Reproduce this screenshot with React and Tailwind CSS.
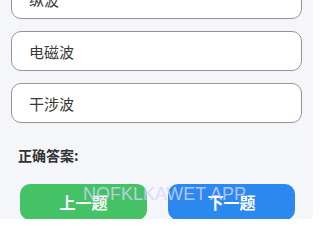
export default function App() {
  const font = { fontFamily: '"Noto Sans CJK SC", "Noto Sans", sans-serif' };
  return (
    <div className="w-[313px] h-[219px] overflow-hidden bg-[#f4f6f9] relative" style={font}>
      <div className="flex flex-col gap-[12px] px-[11px] -mt-[21px] w-[313px]">
        {['纵波', '电磁波', '干涉波'].map((t) => (
          <div key={t} className="h-[40px] bg-white border border-[#959595] rounded-[10px] flex items-center pl-[17px] text-[15px] text-[#3a3a3a] leading-none">
            {t}
          </div>
        ))}
      </div>
      <div className="pl-[18px] mt-[25px] text-[14px] font-bold text-[#333] leading-none">正确答案:</div>
      <div className="flex gap-[21px] pl-[20px] mt-[22px]">
        <div className="w-[127px] h-[36px] rounded-[10px] bg-[#45c266] flex items-center justify-center text-white font-bold text-[16px] leading-none">上一题</div>
        <div className="w-[127px] h-[36px] rounded-[10px] bg-[#2a88ee] flex items-center justify-center text-white font-bold text-[16px] leading-none">下一题</div>
      </div>
      <div className="absolute left-[83px] top-[185px] text-[18px] leading-none text-[#d8d4ff]/80" style={{ fontFamily: '"Liberation Sans", sans-serif' }}>NOFKLKAWET APP</div>
    </div>
  );
}
